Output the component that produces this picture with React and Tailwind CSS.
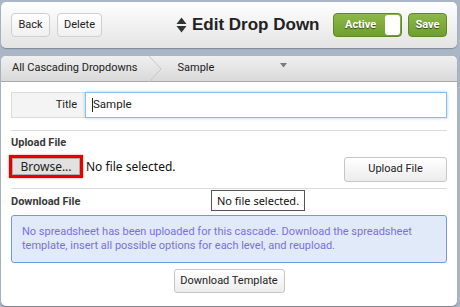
export default function App() {
    return (
        <div className="h-[307px] w-[460px] overflow-hidden bg-[#a9b6c6] px-[1px] pt-[2px] font-['Roboto',sans-serif] text-[11px] text-[#222]">
            {/* top bar */}
            <div className="flex h-[46px] w-[456px] items-center rounded-[5px] bg-gradient-to-b from-white to-[#e4e4e4] px-[10px] shadow-[0_1px_1px_rgba(0,0,0,0.25)]">
                <button className="h-[24px] w-[39px] rounded-[4px] border border-[#cfcfcf] bg-gradient-to-b from-white to-[#f0f0f0] text-[11px] text-[#222]">
                    Back
                </button>
                <button className="ml-[7px] h-[24px] w-[45px] rounded-[4px] border border-[#cfcfcf] bg-gradient-to-b from-white to-[#f0f0f0] text-[11px] text-[#222]">
                    Delete
                </button>
                <div className="ml-[74px] flex items-center gap-[5px]">
                    <svg width="11" height="16" viewBox="0 0 11 16">
                        <path d="M5.5 0.5 L10.5 7 H0.5 Z" fill="#333" />
                        <path d="M5.5 15.5 L10.5 9 H0.5 Z" fill="#333" />
                    </svg>
                    <span className="font-['Liberation_Sans',sans-serif] text-[17px] font-bold text-[#222]">Edit Drop Down</span>
                </div>
                <div className="ml-auto flex items-center gap-[6px]">
                    <div className="flex h-[24px] w-[69px] items-center rounded-[4px] border border-[#5f8a22] bg-gradient-to-b from-[#8cb848] to-[#709f2e] pl-[11px] pr-[1px]">
                        <span className="text-[11px] font-bold text-white [text-shadow:0_1px_1px_rgba(0,0,0,0.6)]">Active</span>
                        <div className="ml-auto h-[20px] w-[15px] rounded-[3px] bg-white" />
                    </div>
                    <button className="h-[24px] w-[39px] rounded-[4px] border border-[#5f8a22] bg-gradient-to-b from-[#8cb848] to-[#709f2e] text-[11px] font-bold text-white [text-shadow:0_1px_1px_rgba(0,0,0,0.6)]">
                        Save
                    </button>
                </div>
            </div>

            {/* main card */}
            <div className="mt-[8px] h-[250px] w-[456px] overflow-hidden rounded-[5px] bg-white shadow-[0_1px_1px_rgba(0,0,0,0.3)]">
                <div className="flex h-[26px] items-center border-b border-[#a8a8a8] bg-gradient-to-b from-[#f0f0f0] to-[#d9d9d9]">
                    <span className="pl-[11px] text-[11px] text-[#222]">All Cascading Dropdowns</span>
                    <svg width="14" height="26" viewBox="0 0 14 26" className="ml-[12px]">
                        <path d="M0 0 L12 13 L0 26" fill="none" stroke="#c8c8c8" strokeWidth="1" />
                    </svg>
                    <span className="ml-[14px] text-[11px] text-[#222]">Sample</span>
                    <svg width="7" height="5" viewBox="0 0 7 5" className="ml-[66px] mt-[-6px]">
                        <path d="M0 0 H7 L3.5 4.5 Z" fill="#7a7a7a" />
                    </svg>
                </div>

                <div className="px-[10px]">
                    <div className="mt-[10px] flex h-[26px]">
                        <div className="flex w-[74px] items-center justify-end border border-r-0 border-[#dcdcdc] bg-[#f4f4f4] pr-[8px] text-[11px] text-[#222]">
                            Title
                        </div>
                        <div className="flex flex-1 items-center border border-[#88bdf2] pl-[6px] text-[11.5px] text-[#222] shadow-[0_0_3px_rgba(100,170,240,0.6)]">
                            <span className="h-[14px] w-[1px] bg-[#222]" />
                            Sample
                        </div>
                    </div>

                    <div className="mt-[12px] border-t border-[#dcdcdc] pt-[5px]">
                        <div className="h-[14px] text-[11px] leading-[14px] font-bold text-[#3a3a3a]">Upload File</div>
                        <div className="mt-[5px] flex items-start">
                            <div className="ml-[-2px] border-[3px] border-[#e60000] shadow-[0_0_2px_rgba(200,0,0,0.5)]">
                                <button className="block h-[17px] w-[68px] border border-[#adadad] bg-[#e1e1e1] font-['Noto_Sans',sans-serif] text-[12px] leading-none text-[#222]">
                                    Browse...
                                </button>
                            </div>
                            <span className="ml-[3px] mt-[3px] font-['Noto_Sans',sans-serif] text-[12px] leading-[17px] text-[#111]">No file selected.</span>
                            <button className="ml-auto mt-[2px] h-[25px] w-[103px] rounded-[3px] border border-[#c6c6c6] bg-gradient-to-b from-white to-[#ececec] text-[11px] text-[#222]">
                                Upload File
                            </button>
                        </div>
                    </div>

                    <div className="relative mt-[6px] border-t border-[#dcdcdc] pt-[6px]">
                        <div className="h-[14px] text-[11px] leading-[14px] font-bold text-[#3a3a3a]">Download File</div>
                        <div className="absolute left-[200px] top-[1px] border border-[#555] bg-white px-[5px] py-[2px] font-['Noto_Sans',sans-serif] text-[11px] leading-[15px] text-[#111]">
                            No file selected.
                        </div>
                        <div className="mt-[6px] rounded-[3px] border border-[#6d9ae6] bg-[#e1eaf9] px-[10px] py-[9px] text-[11px] leading-[14px] text-[#7b6ee4]">
                            No spreadsheet has been uploaded for this cascade. Download the spreadsheet template, insert all possible options for each level, and reupload.
                        </div>
                        <div className="mt-[6px] flex justify-center">
                            <button className="h-[24px] w-[111px] rounded-[3px] border border-[#c6c6c6] bg-gradient-to-b from-white to-[#ececec] text-[11px] text-[#222]">
                                Download Template
                            </button>
                        </div>
                    </div>
                </div>
            </div>
        </div>
    );
}
